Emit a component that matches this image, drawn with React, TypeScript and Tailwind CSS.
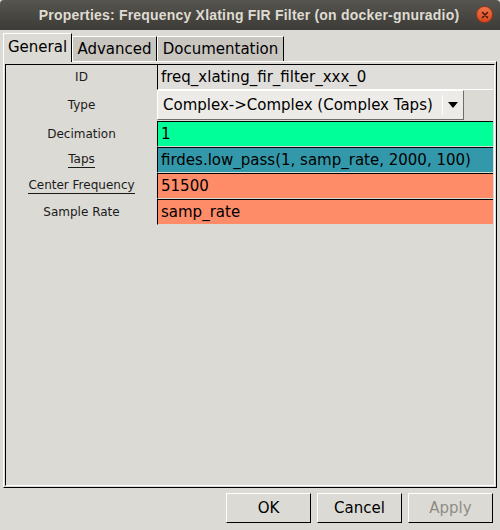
import React from 'react'

const rows: { label: string; value: string; bg: string; underline?: boolean }[] = [
  { label: 'Decimation', value: '1', bg: 'bg-[#00ff99]' },
  { label: 'Taps', value: 'firdes.low_pass(1, samp_rate, 2000, 100)', bg: 'bg-[#3399aa]', underline: true },
  { label: 'Center Frequency', value: '51500', bg: 'bg-[#ff8c69]', underline: true },
  { label: 'Sample Rate', value: 'samp_rate', bg: 'bg-[#ff8c69]' },
]

function Label({ text, underline }: { text: string; underline?: boolean }) {
  return (
    <div className="w-[151px] shrink-0 flex justify-center items-center text-[12px] text-[#1a1a1a]">
      <span className={underline ? 'border-b border-[#1a1a1a] leading-[15px]' : 'leading-[15px]'}>{text}</span>
    </div>
  )
}

export default function App() {
  return (
    <div className="w-[500px] h-[530px] bg-[#dcdad5] flex flex-col font-['DejaVu_Sans',sans-serif] overflow-hidden">
      {/* Title bar */}
      <div className="h-[30px] shrink-0 flex items-center justify-center relative bg-gradient-to-b from-[#56554f] to-[#3c3b37] rounded-t-[4px]">
        <span className="text-[14px] font-bold text-[#dfdbd2] font-['Liberation_Sans',sans-serif] tracking-[0.2px] -ml-[2px]">
          Properties: Frequency Xlating FIR Filter (on docker-gnuradio)
        </span>
        <div className="absolute right-[7px] top-[6px] w-[17px] h-[17px] rounded-full bg-gradient-to-b from-[#f0744a] to-[#d8461c] border border-[#9c3414] flex items-center justify-center">
          <svg width="8" height="8" viewBox="0 0 8 8">
            <path d="M1.5 1.5l5 5M6.5 1.5l-5 5" stroke="#3a1408" strokeWidth="1.4" strokeLinecap="round" />
          </svg>
        </div>
      </div>

      <div className="flex-1 flex flex-col px-[3px] pt-[2px]">
        {/* Tabs */}
        <div className="h-[29px] shrink-0 flex items-end text-[15px] text-black">
          <div className="h-[29px] w-[69px] flex items-center justify-center bg-[#dcdad5] border-l border-t border-white border-r border-r-black relative z-10 -mb-px pb-[2px]">
            General
          </div>
          <div className="h-[25px] w-[85px] flex items-center justify-center bg-[#c9c6c0] border-l border-t border-white border-r border-r-black">
            Advanced
          </div>
          <div className="h-[25px] w-[127px] flex items-center justify-center bg-[#c9c6c0] border-l border-t border-white border-r border-r-black">
            Documentation
          </div>
        </div>

        {/* Notebook */}
        <div className="flex-1 flex flex-col border-l border-t border-white border-r border-b border-r-black border-b-black p-px pt-[2px]">
          <div className="flex-1 flex flex-col border-l border-t border-black border-r border-b border-r-white border-b-white pr-px">
            {/* ID */}
            <div className="h-[25px] flex">
              <Label text="ID" />
              <div className="flex-1 bg-[#e0dedb] border-l border-black border-b border-b-white flex items-center pl-[3px] text-[15px] text-black">
                freq_xlating_fir_filter_xxx_0
              </div>
            </div>
            {/* Type */}
            <div className="h-[31px] flex">
              <Label text="Type" />
              <div className="w-[307px] h-[30px] bg-[#edebe7] border-l border-t border-white border-r border-b border-r-[#6f6d67] border-b-[#6f6d67] flex items-center text-[15px] text-black">
                <span className="flex-1 pl-[5px]">Complex-&gt;Complex (Complex Taps)</span>
                <span className="w-px h-[20px] bg-[#9a9892] border-r border-white" />
                <span className="w-[20px] flex justify-center">
                  <svg width="10" height="6" viewBox="0 0 10 6">
                    <path d="M0 0h10L5 6z" fill="#000" />
                  </svg>
                </span>
              </div>
            </div>
            {rows.map((r) => (
              <div key={r.label} className="h-[26px] flex">
                <Label text={r.label} underline={r.underline} />
                <div className={`flex-1 ${r.bg} border-l border-t border-black border-b border-b-[#dcdad5] flex items-center pl-[3px] text-[15px] text-black`}>
                  {r.value}
                </div>
              </div>
            ))}
          </div>
        </div>
      </div>

      {/* Buttons */}
      <div className="h-[42px] shrink-0 flex justify-end items-start gap-[6px] pr-[7px] pt-[5px] text-[15px]">
        {['OK', 'Cancel', 'Apply'].map((b) => (
          <div
            key={b}
            className={`w-[85px] h-[30px] flex items-center justify-center bg-[#dcdad5] border-l border-t border-white border-r border-b border-r-black border-b-black ${b === 'Apply' ? 'text-[#8e8c87]' : 'text-black'}`}
          >
            {b}
          </div>
        ))}
      </div>
    </div>
  )
}
